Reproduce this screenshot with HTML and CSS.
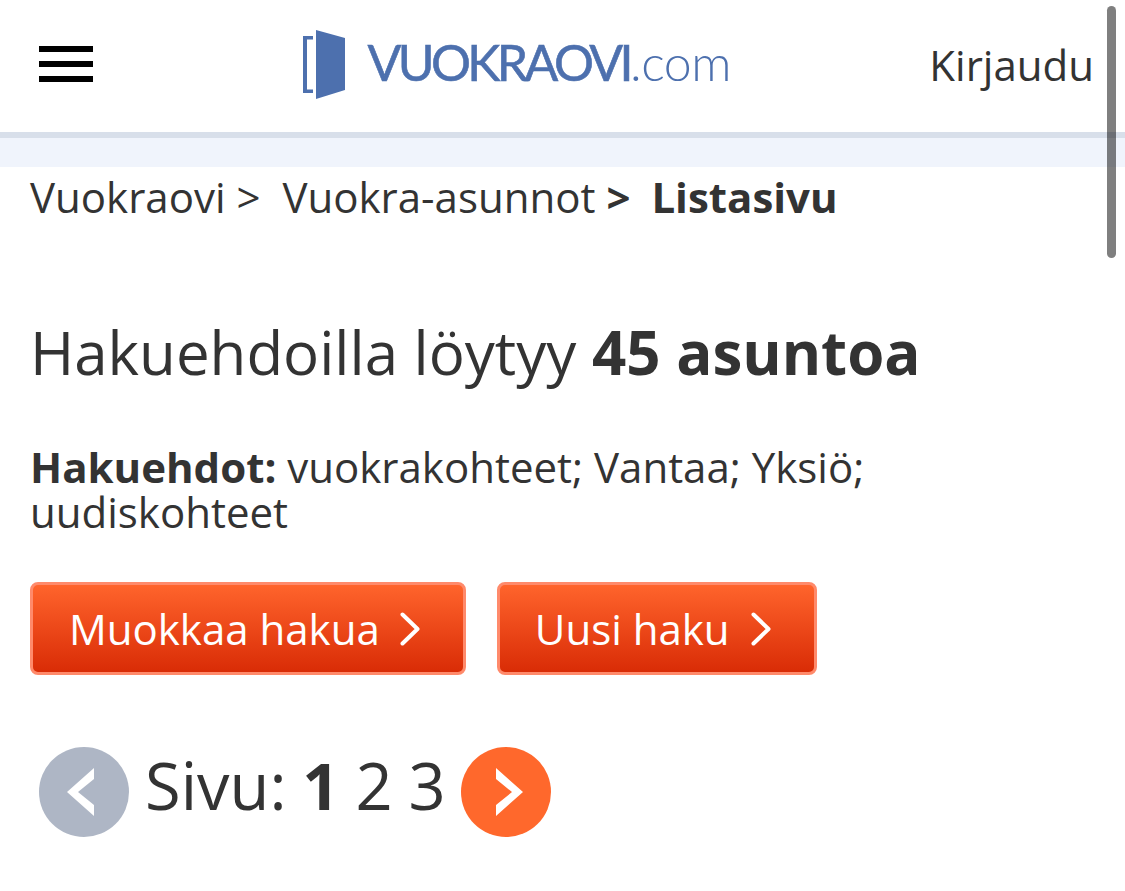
FILE: index.html
```html
<!DOCTYPE html>
<html lang="fi">
<head>
    <meta charset="UTF-8">
    <meta name="viewport" content="width=device-width, initial-scale=1.0">
    <title>Vuokraovi</title>
    <link rel="stylesheet" href="styles.css">
</head>
<body>
    <header class="topbar">
        <button class="menu-btn" aria-label="Valikko">
            <span></span><span></span><span></span>
        </button>
        <a class="logo" href="#">
            <svg class="logo-door" width="44" height="70" viewBox="0 0 44 70">
                <path d="M14 0L43 8V60L14 69Z" fill="#4d70ae"/>
                <path d="M11 6H1V63H11V59.500H5V9.500H11Z" fill="#4d70ae"/>
            </svg>
            <span class="logo-text">VUOKRAOVI<span class="logo-com">.com</span></span>
        </a>
        <a class="login" href="#">Kirjaudu</a>
    </header>
    <div class="band"></div>

    <nav class="crumbs">
        <a href="#">Vuokraovi</a><span class="sep">&gt;</span>
        <a href="#">Vuokra-asunnot</a><b class="sep sep-last">&gt;</b>
        <b>Listasivu</b>
    </nav>

    <main class="content">
        <h1>Hakuehdoilla löytyy <b>45 asuntoa</b></h1>
        <p class="terms"><b>Hakuehdot:</b> vuokrakohteet; Vantaa; Yksiö; uudiskohteet</p>

        <div class="actions">
            <a class="btn btn-edit" href="#">Muokkaa hakua
                <svg width="20" height="34" viewBox="0 0 20 34"><path d="M2.500 2.500L17.500 17L2.500 31.500" fill="none" stroke="#fff" stroke-width="4" stroke-linecap="round" stroke-linejoin="round"/></svg>
            </a>
            <a class="btn" href="#">Uusi haku
                <svg width="20" height="34" viewBox="0 0 20 34"><path d="M2.500 2.500L17.500 17L2.500 31.500" fill="none" stroke="#fff" stroke-width="4" stroke-linecap="round" stroke-linejoin="round"/></svg>
            </a>
        </div>

        <div class="pager">
            <a class="round round-off" href="#">
                <svg class="arrow-prev" width="27" height="48" viewBox="0 0 27 48"><path d="M27 0V11L11 24L27 37V48L0 24Z" fill="#fff"/></svg>
            </a>
            <span class="pages">Sivu: <b>1</b> <a href="#">2</a> <a href="#">3</a></span>
            <a class="round round-on" href="#">
                <svg class="arrow-next" width="27" height="48" viewBox="0 0 27 48"><path d="M0 0V11L16 24L0 37V48L27 24Z" fill="#fff"/></svg>
            </a>
        </div>
    </main>

    <div class="scroll-thumb"></div>
</body>
</html>
```

FILE: styles.css
```css
html, body {
    height: 100%;
}
body {
    font-family: "Open Sans", Arial, sans-serif;
    margin: 0;
    padding: 0;
    background-color: #fff;
    color: #333;
    overflow: hidden;
}
a {
    color: inherit;
    text-decoration: none;
}
.topbar {
    height: 128px;
    display: flex;
    align-items: center;
    justify-content: space-between;
    padding: 0 31px 4px 39px;
    border-bottom: 6px solid #d8dfea;
}
.menu-btn {
    width: 54px;
    display: flex;
    flex-direction: column;
    gap: 9px;
    padding: 0;
    border: 0;
    background: none;
}
.menu-btn span {
    display: block;
    height: 6px;
    background: #000;
}
.logo {
    display: flex;
    align-items: center;
    gap: 21px;
    margin-left: 11px;
    color: #4d70ae;
}
.logo-door {
    margin-top: 2px;
}
.logo-text {
    font-family: "Lato", "Open Sans", sans-serif;
    font-size: 50px;
    letter-spacing: -3.6px;
    line-height: 1;
    margin-bottom: 4px;
    -webkit-text-stroke: 0.6px #4d70ae;
}
.logo-com {
    font-weight: 300;
    letter-spacing: -0.5px;
    -webkit-text-stroke: 0;
}
.login {
    font-size: 42px;
}
.band {
    height: 29px;
    background: #f0f4fc;
}
.crumbs {
    padding: 3px 30px 0;
    font-size: 42px;
    line-height: 54px;
    white-space: nowrap;
}
.sep {
    margin: 0 11px;
}
.sep-last {
    margin-right: 10px;
}
.content {
    padding: 0 30px;
}
h1 {
    margin: 88px 0 0;
    font-size: 60px;
    font-weight: 400;
    line-height: 80px;
}
.terms {
    margin: 52px 0 0;
    font-size: 42px;
    line-height: 45px;
}
.actions {
    display: flex;
    gap: 31px;
    margin: 48px 0 0;
}
.btn {
    display: flex;
    align-items: center;
    gap: 21px;
    height: 87px;
    padding: 0 43px 0 35px;
    border: 3px solid #ff8a6b;
    border-radius: 8px;
    background: linear-gradient(#ff642c, #d92c06);
    color: #fff;
    font-size: 42px;
}
.btn-edit {
    gap: 20px;
    padding-left: 36px;
}
.pager {
    display: flex;
    align-items: center;
    margin: 72px 0 0 9px;
}
.round {
    width: 90px;
    height: 90px;
    border-radius: 50%;
    display: flex;
    align-items: center;
    justify-content: center;
}
.round-off {
    background: #aeb6c5;
}
.round-on {
    background: #ff682c;
}
.arrow-prev {
    margin-right: 8px;
}
.arrow-next {
    margin-left: 8px;
}
.pages {
    margin: 0 15px 0 16px;
    font-size: 65px;
    word-spacing: -1px;
    line-height: 80px;
    position: relative;
    top: -7px;
}
.scroll-thumb {
    position: absolute;
    left: 1107px;
    top: 6px;
    width: 9px;
    height: 252px;
    border-radius: 5px;
    background: rgba(0, 0, 0, 0.5);
}
```
